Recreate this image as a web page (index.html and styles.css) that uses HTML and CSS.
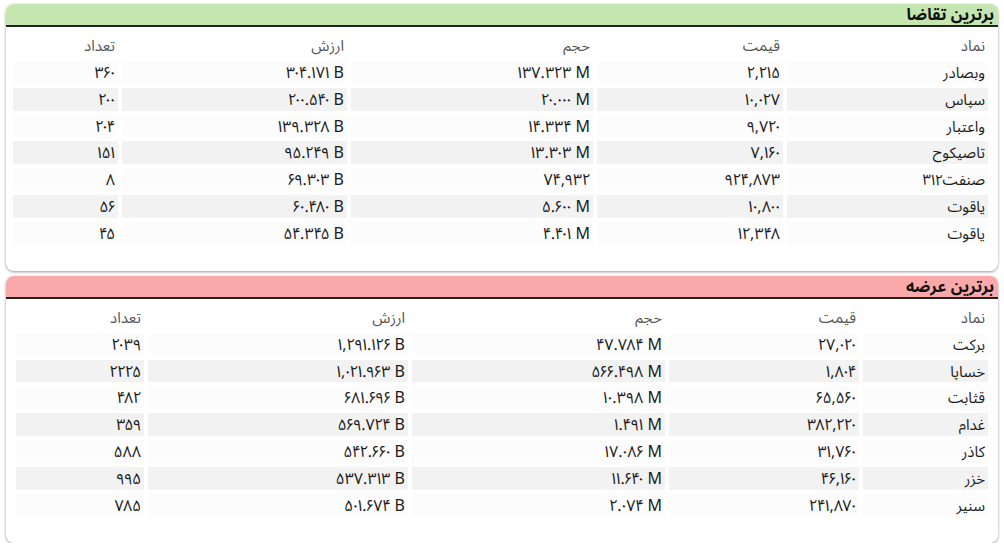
FILE: index.html
```html
<!DOCTYPE html>
<html lang="fa" dir="rtl">
<head>
<meta charset="utf-8">
<title>برترین تقاضا و عرضه</title>
<link rel="stylesheet" href="styles.css">
</head>
<body>
<div class="page">
  <section class="card">
    <h2 class="card-title demand">برترین تقاضا</h2>
    <div class="card-body">
      <table class="grid t1">
        <colgroup>
          <col class="c-sym"><col class="c-price"><col class="c-vol"><col class="c-val"><col class="c-cnt">
        </colgroup>
        <thead>
          <tr><th>نماد</th><th>قیمت</th><th>حجم</th><th>ارزش</th><th>تعداد</th></tr>
        </thead>
        <tbody>
          <tr><td>وبصادر</td><td>۲,۲۱۵</td><td class="ltr">۱۳۷.۳۲۳ M</td><td class="ltr">۳۰۴.۱۷۱ B</td><td>۳۶۰</td></tr>
          <tr><td>سپاس</td><td>۱۰,۰۲۷</td><td class="ltr">۲۰.۰۰۰ M</td><td class="ltr">۲۰۰.۵۴۰ B</td><td>۲۰۰</td></tr>
          <tr><td>واعتبار</td><td>۹,۷۲۰</td><td class="ltr">۱۴.۳۳۴ M</td><td class="ltr">۱۳۹.۳۲۸ B</td><td>۲۰۴</td></tr>
          <tr><td>تاصیکوح</td><td>۷,۱۶۰</td><td class="ltr">۱۳.۳۰۳ M</td><td class="ltr">۹۵.۲۴۹ B</td><td>۱۵۱</td></tr>
          <tr><td>صنفت۳۱۲</td><td>۹۲۴,۸۷۳</td><td>۷۴,۹۳۲</td><td class="ltr">۶۹.۳۰۳ B</td><td>۸</td></tr>
          <tr><td>یاقوت</td><td>۱۰,۸۰۰</td><td class="ltr">۵.۶۰۰ M</td><td class="ltr">۶۰.۴۸۰ B</td><td>۵۶</td></tr>
          <tr><td>یاقوت</td><td>۱۲,۳۴۸</td><td class="ltr">۴.۴۰۱ M</td><td class="ltr">۵۴.۳۴۵ B</td><td>۴۵</td></tr>
        </tbody>
      </table>
    </div>
  </section>

  <section class="card">
    <h2 class="card-title supply">برترین عرضه</h2>
    <div class="card-body">
      <table class="grid t2">
        <colgroup>
          <col class="c-sym"><col class="c-price"><col class="c-vol"><col class="c-val"><col class="c-cnt">
        </colgroup>
        <thead>
          <tr><th>نماد</th><th>قیمت</th><th>حجم</th><th>ارزش</th><th>تعداد</th></tr>
        </thead>
        <tbody>
          <tr><td>برکت</td><td>۲۷,۰۲۰</td><td class="ltr">۴۷.۷۸۴ M</td><td class="ltr">۱,۲۹۱.۱۲۶ B</td><td>۲۰۳۹</td></tr>
          <tr><td>خساپا</td><td>۱,۸۰۴</td><td class="ltr">۵۶۶.۴۹۸ M</td><td class="ltr">۱,۰۲۱.۹۶۳ B</td><td>۲۲۲۵</td></tr>
          <tr><td>قثابت</td><td>۶۵,۵۶۰</td><td class="ltr">۱۰.۳۹۸ M</td><td class="ltr">۶۸۱.۶۹۶ B</td><td>۴۸۲</td></tr>
          <tr><td>غدام</td><td>۳۸۲,۲۲۰</td><td class="ltr">۱.۴۹۱ M</td><td class="ltr">۵۶۹.۷۲۴ B</td><td>۳۵۹</td></tr>
          <tr><td>کاذر</td><td>۳۱,۷۶۰</td><td class="ltr">۱۷.۰۸۶ M</td><td class="ltr">۵۴۲.۶۶۰ B</td><td>۵۸۸</td></tr>
          <tr><td>خزر</td><td>۴۶,۱۶۰</td><td class="ltr">۱۱.۶۴۰ M</td><td class="ltr">۵۳۷.۳۱۳ B</td><td>۹۹۵</td></tr>
          <tr><td>سنیر</td><td>۲۴۱,۸۷۰</td><td class="ltr">۲.۰۷۴ M</td><td class="ltr">۵۰۱.۶۷۴ B</td><td>۷۸۵</td></tr>
        </tbody>
      </table>
    </div>
  </section>
</div>
</body>
</html>
```

FILE: styles.css
```css
html, body {
  margin: 0;
  padding: 0;
  background: #ffffff;
}

body {
  font-family: "Noto Sans Arabic UI", "Noto Sans Arabic", Vazirmatn, "DejaVu Sans", sans-serif;
  color: #1c1c1c;
  font-size: 15px;
}

.page {
  display: flex;
  flex-direction: column;
  gap: 5px;
  padding: 4px 6px 0 6px;
}

.card {
  background: #ffffff;
  border-radius: 8px;
  box-shadow: 0 1px 3px rgba(0, 0, 0, 0.4);
  overflow: hidden;
}

.card-title {
  margin: 0;
  height: 21px;
  line-height: 21px;
  font-size: 16px;
  font-weight: bold;
  color: #111111;
  padding: 0 4px;
  border-bottom: 2px solid #222222;
  white-space: nowrap;
}

.card-title.demand {
  background: #c5e5b1;
}

.card-title.supply {
  background: #f9a9a9;
}

.card-body {
  padding: 3px 6px 22px 6px;
}

.grid {
  width: 100%;
  border-collapse: separate;
  border-spacing: 4px 4px;
  table-layout: fixed;
}

.grid th,
.grid td {
  text-align: right;
  padding: 0 3px;
  height: 22.86px;
  line-height: 22.86px;
  white-space: nowrap;
  font-size: 15px;
}

.grid td + td {
  font-size: 16px;
}

.grid th {
  font-weight: normal;
  color: #555555;
  background: #ffffff;
}

.grid tbody tr:nth-child(odd) td {
  background: #fcfcfc;
}

.grid tbody tr:nth-child(even) td {
  background: #f2f2f2;
}

.grid td.ltr {
  direction: ltr;
  text-align: right;
}

.t1 .c-sym { width: 201px; }
.t1 .c-price { width: 186px; }
.t1 .c-vol { width: 242px; }
.t1 .c-val { width: 225px; }
.t1 .c-cnt { width: 105px; }

.t2 .c-sym { width: 125px; }
.t2 .c-price { width: 190px; }
.t2 .c-vol { width: 253px; }
.t2 .c-val { width: 260px; }
.t2 .c-cnt { width: 128px; }
```
